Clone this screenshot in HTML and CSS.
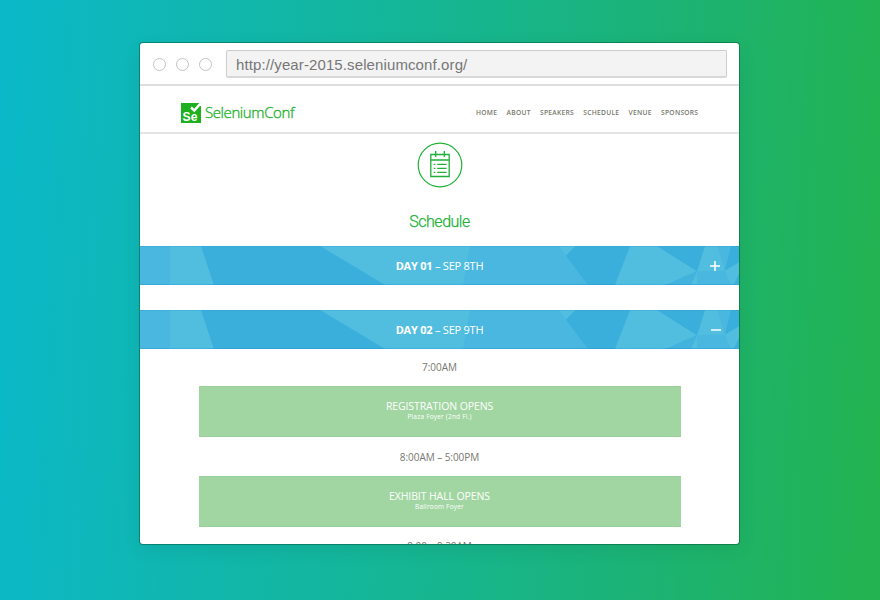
FILE: index.html
```
<!DOCTYPE html>
<html lang="en">
<head>
<meta charset="utf-8">
<title>SeleniumConf Schedule</title>
<link rel="stylesheet" href="styles.css">
</head>
<body>
<svg width="0" height="0" class="defs" aria-hidden="true">
  <symbol id="facets" viewBox="0 0 600 40" preserveAspectRatio="none">
    <rect width="600" height="40" fill="#49b7df"/>
    <path fill="#52bedf" d="M30 0H61L74 40H30zM180 0H330L323 40H245zM419 0H435.500L426 10zM490 0H517L557 26 525 40H475zM565 0H577L585 25 557 26zM557 26V40H551zM585 25L600 16V26L593 40H591z"/>
    <path fill="#3aafdb" d="M61 0H180L245 40H74zM435.500 0H490L475 40H448L426 10zM517 0H565L557 26zM591 0H600V16L585 25zM600 27V40H594z"/>
    <path fill="#42b3dd" d="M557 26L525 40H551z"/>
  </symbol>
</svg>
<div class="window">
  <div class="chrome">
    <span class="dot"></span><span class="dot"></span><span class="dot"></span>
    <div class="address"><span>http://year-2015.seleniumconf.org/</span></div>
  </div>
  <header class="header">
    <div class="logo">
      <svg class="mark" viewBox="0 0 20 20">
        <path fill="#1eb01e" d="M0 0H19V3H20V20H0z"/>
        <path d="M10 4.500L13.300 7.500 19.500 .500" fill="none" stroke="#fff" stroke-width="2.400"/>
        <text x="1.600" y="17.500" textLength="14.800" lengthAdjust="spacingAndGlyphs">Se</text>
      </svg>
      <span class="brand">SeleniumConf</span>
    </div>
    <nav class="nav"><a>HOME</a><a>ABOUT</a><a>SPEAKERS</a><a>SCHEDULE</a><a>VENUE</a><a>SPONSORS</a></nav>
  </header>
  <main>
    <svg class="badge" viewBox="0 0 46 46" fill="none" stroke="#20b038">
      <circle cx="23" cy="23" r="21.800" stroke-width="1.200"/>
      <path d="M13.800 12.500H32.200V34.500H13.800zM13.800 18H32.200" stroke-width="1.300"/>
      <path d="M18.700 9V15M27.300 9V15M20.300 22.300H29.500M20.300 26.300H29.500M20.300 30.300H29.500M16.700 22.300H18.300M16.700 26.300H18.300M16.700 30.300H18.300" stroke-width="1.300"/>
    </svg>
    <h1>Schedule</h1>
    <section class="day first">
      <svg class="facets"><use href="#facets"/></svg>
      <h2><b>DAY 01</b> – SEP 8TH</h2>
      <svg class="toggle" viewBox="0 0 10 10"><path d="M0 5H10M5 0V10"/></svg>
    </section>
    <section class="day second">
      <svg class="facets"><use href="#facets"/></svg>
      <h2><b>DAY 02</b> – SEP 9TH</h2>
      <svg class="toggle minus" viewBox="0 0 10 10"><path d="M0 5H10"/></svg>
    </section>
    <p class="time seven">7:00AM</p>
    <article class="event"><h3>REGISTRATION OPENS</h3><p>Plaza Foyer (2nd Fl.)</p></article>
    <p class="time eight">8:00AM – 5:00PM</p>
    <article class="event"><h3>EXHIBIT HALL OPENS</h3><p>Ballroom Foyer</p></article>
    <p class="time nine">9:00 – 9:30AM</p>
  </main>
</div>
</body>
</html>
```
FILE: styles.css
```
* { box-sizing: border-box; }
html, body { height: 100%; }
body {
  margin: 0;
  padding: 43px 0 0 140px;
  overflow: hidden;
  background: linear-gradient(93deg, #0ab8c8 0%, #0fb7b6 17%, #15b696 46%, #1cb373 75%, #23b34f 100%);
  font-family: "Open Sans", "Noto Sans", sans-serif;
}
.defs { position: absolute; }
.window {
  width: 599px;
  height: 501px;
  overflow: hidden;
  background: #fff;
  border-radius: 3px;
  box-shadow: 0 0 0 1px rgba(0, 70, 45, .42), 0 5px 18px rgba(0, 60, 40, .1);
}
.chrome {
  display: flex;
  align-items: center;
  height: 43px;
  padding-left: 13px;
  border-bottom: 2px solid #dedede;
}
.dot {
  flex: none;
  width: 13px;
  height: 13px;
  margin: 2px 10px 0 0;
  border: 1px solid #c3c3c3;
  border-radius: 50%;
}
.address {
  width: 501px;
  height: 28px;
  margin: 1px 0 0 4px;
  padding-left: 9px;
  border: 1px solid #cdcdcd;
  border-bottom: 2px solid #d8d8d8;
  border-radius: 2px;
  background: #f3f3f3;
  color: #777;
  font: 15px/27px "Liberation Sans", sans-serif;
  letter-spacing: .11px;
  white-space: nowrap;
}
.header {
  display: flex;
  justify-content: space-between;
  height: 48px;
  padding: 0 40.700px 0 41.400px;
  border-bottom: 2px solid #e4e4e4;
}
.logo { display: flex; padding-top: 17px; }
.mark { width: 20px; height: 20px; }
.mark text { fill: #fff; font: bold 12px "Liberation Sans", sans-serif; }
.brand {
  margin-left: 3.500px;
  color: #1fb22e;
  font: 300 15px/19px "Open Sans", sans-serif;
  -webkit-text-stroke: .35px #1fb22e;
  letter-spacing: -.39px;
}
.nav {
  display: flex;
  gap: 9.300px;
  padding-top: 22px;
  color: #77776c;
  font-size: 6.7px;
  font-weight: 600;
  line-height: 10px;
  letter-spacing: .26px;
}
main { display: flex; flex-direction: column; align-items: center; }
.badge { width: 46px; height: 46px; margin-top: 8px; }
h1 {
  margin: 22.500px 0 0;
  color: #20b038;
  font: 300 16px/22px Roboto, sans-serif;
  letter-spacing: -.5px;
  -webkit-text-stroke: .25px #20b038;
}
.day {
  display: grid;
  flex: none;
  place-items: center;
  position: relative;
  width: 600px;
  height: 39px;
}
.first { margin-top: 13.500px; }
.second { margin-top: 25px; }
.facets { position: absolute; inset: 0; width: 100%; height: 100%; }
.day::after {
  content: "";
  position: absolute;
  inset: 0;
  border-top: 1px solid rgba(40, 162, 212, .3);
  border-bottom: 1px solid rgba(25, 150, 210, .35);
}
h2 {
  position: relative;
  margin: 0;
  color: #fff;
  font: 400 11px/16px "Open Sans", sans-serif;
  letter-spacing: -.23px;
}
.toggle {
  position: absolute;
  right: 20px;
  top: 15px;
  width: 10px;
  height: 10px;
  stroke: #fff;
  stroke-width: 1.5;
}
.minus { right: 19px; }
.time {
  margin: 0;
  color: #77776f;
  font-size: 10px;
  line-height: 14px;
  letter-spacing: -.05px;
}
.seven { margin-top: 11px; }
.eight, .nine { margin-top: 12.500px; }
.event {
  flex: none;
  width: 482px;
  height: 51px;
  margin-top: 12px;
  padding-top: 12px;
  border: 1px solid #98cf9b;
  border-width: 1px 0;
  background: #a1d6a2;
  color: #fff;
  text-align: center;
}
.event h3 { margin: 0; font: 400 10.5px/14px "Open Sans", sans-serif; letter-spacing: -.1px; }
.event p { margin: 0; font-size: 6.5px; line-height: 8px; letter-spacing: .2px; }
```
